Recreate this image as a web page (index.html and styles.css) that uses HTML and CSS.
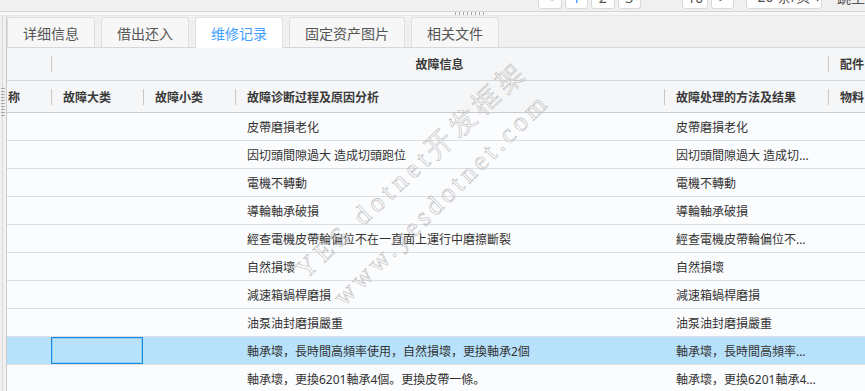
FILE: index.html
```html
<!DOCTYPE html>
<html>
<head>
    <meta charset="utf-8">
    <title>维修记录</title>
    <link rel="stylesheet" href="styles.css">
</head>
<body>
    <div class="page">
        <div class="toolbar">
            <div class="pager">
                <span class="pg disabled">&lt;</span>
                <span class="pg current">1</span>
                <span class="pg">2</span>
                <span class="pg">3</span>
                <span class="pg more">•••</span>
                <span class="pg wide">10</span>
                <span class="pg">&gt;</span>
                <span class="size">20 条/页 ▾</span>
                <span class="jump">跳至</span>
            </div>
        </div>
        <div class="hsplit"><span class="hgrip"></span></div>

        <div class="main">
            <div class="vsplit"><span class="vgrip"></span></div>
            <div class="panel">
                <div class="tabs">
                    <span class="tab">详细信息</span>
                    <span class="tab">借出还入</span>
                    <span class="tab active">维修记录</span>
                    <span class="tab">固定资产图片</span>
                    <span class="tab">相关文件</span>
                </div>

                <div class="grid">
                    <table>
                        <colgroup>
                            <col style="width: 44px">
                            <col style="width: 92px">
                            <col style="width: 92px">
                            <col style="width: 429px">
                            <col style="width: 164px">
                            <col style="width: 120px">
                            <col style="width: 120px">
                        </colgroup>
                        <thead>
                            <tr class="group">
                                <th></th>
                                <th colspan="4" class="sep center">故障信息</th>
                                <th colspan="2" class="sep">配件</th>
                            </tr>
                            <tr class="cols">
                                <th class="clip">称</th>
                                <th class="sep">故障大类</th>
                                <th class="sep">故障小类</th>
                                <th class="sep">故障诊断过程及原因分析</th>
                                <th class="sep">故障处理的方法及结果</th>
                                <th class="sep">物料</th>
                                <th class="sep">数量</th>
                            </tr>
                        </thead>
                        <tbody>
                            <tr><td></td><td></td><td></td><td>皮帶磨損老化</td><td>皮帶磨損老化</td><td></td><td></td></tr>
                            <tr><td></td><td></td><td></td><td>因切頭間隙過大 造成切頭跑位</td><td>因切頭間隙過大 造成切頭跑位</td><td></td><td></td></tr>
                            <tr><td></td><td></td><td></td><td>電機不轉動</td><td>電機不轉動</td><td></td><td></td></tr>
                            <tr><td></td><td></td><td></td><td>導輪軸承破損</td><td>導輪軸承破損</td><td></td><td></td></tr>
                            <tr><td></td><td></td><td></td><td>經查電機皮帶輪偏位不在一直面上運行中磨擦斷裂</td><td>經查電機皮帶輪偏位不在一直面上運行中磨擦斷裂</td><td></td><td></td></tr>
                            <tr><td></td><td></td><td></td><td>自然損壞</td><td>自然損壞</td><td></td><td></td></tr>
                            <tr><td></td><td></td><td></td><td>減速箱蝸桿磨損</td><td>減速箱蝸桿磨損</td><td></td><td></td></tr>
                            <tr><td></td><td></td><td></td><td>油泵油封磨損嚴重</td><td>油泵油封磨損嚴重</td><td></td><td></td></tr>
                            <tr class="sel"><td></td><td class="cur"></td><td></td><td>軸承壞，長時間高頻率使用，自然損壞，更換軸承2個</td><td>軸承壞，長時間高頻率使用，自然損壞，更換軸承2個</td><td></td><td></td></tr>
                            <tr><td></td><td></td><td></td><td>軸承壞，更換6201軸承4個。更換皮帶一條。</td><td>軸承壞，更換6201軸承4個。更換皮帶一條。</td><td></td><td></td></tr>
                        </tbody>
                    </table>
                </div>
            </div>
        </div>

        <svg class="watermark" width="865" height="391" viewBox="0 0 865 391">
            <text x="306" y="280" textLength="300" lengthAdjust="spacing" transform="rotate(-43 306 280)">YES dotnet开发框架</text>
            <text x="344" y="307" textLength="286" lengthAdjust="spacing" transform="rotate(-44.5 344 307)">www.yesdotnet.com</text>
        </svg>
    </div>
</body>
</html>
```

FILE: styles.css
```css
body { margin: 0; font-family: "Noto Sans", "Noto Sans CJK SC", "Noto Sans CJK TC", sans-serif; font-size: 12px; color: #333; background: #f0f0f0; overflow: hidden; }
.page { position: relative; width: 865px; height: 391px; overflow: hidden; }

/* pager (scrolled half out of view) */
.toolbar { height: 11px; overflow: hidden; background: #f0f0f0; }
.pager { display: flex; align-items: center; gap: 3px; height: 24px; margin-top: -15px; padding-left: 538px; font-size: 14px; white-space: nowrap; }
.pg { width: 24px; height: 24px; box-sizing: border-box; border: 1px solid #d9d9d9; border-radius: 3px; background: #fff; display: flex; align-items: center; justify-content: center; color: #555; }
.pg.disabled { color: #c0c0c0; }
.pg.current { color: #1890ff; }
.pg.more { width: 33px; border-color: transparent; background: none; color: #bbb; font-size: 10px; }
.pg.wide { width: 26px; margin-left: 3px; }
.size { height: 24px; width: 76px; box-sizing: border-box; margin-left: 9px; border: 1px solid #d9d9d9; border-radius: 3px; background: #fff; padding-left: 10px; line-height: 22px; color: #555; }
.jump { margin-left: 12px; color: #555; }

/* splitters */
.hsplit { height: 3px; border-top: 1px solid #d6d6d6; border-bottom: 1px solid #e6e6e6; background: #f7f7f7; display: flex; align-items: center; }
.hgrip { width: 30px; height: 3px; margin-left: 455px; background: repeating-linear-gradient(90deg, #a8a8a8 0 1px, transparent 1px 4px); }
.main { display: flex; height: 375px; }
.vsplit { width: 3px; margin-left: 2px; border-left: 1px solid #d9d9d9; border-right: 1px solid #c9c9c9; background: #f2f2f2; }
.vgrip { display: block; width: 4px; height: 30px; margin: 72px 0 0 -2px; background: repeating-linear-gradient(#aaa 0 1px, transparent 1px 3px); }

.panel { flex: 1; min-width: 0; display: flex; flex-direction: column; background: #fff; overflow: hidden; }

/* tabs */
.tabs { height: 32px; box-sizing: border-box; display: flex; align-items: flex-end; gap: 6px; border-bottom: 1px solid #d4d7dc; background: #f0f0f0; }
.tab { height: 30px; box-sizing: border-box; padding: 0 15px; display: flex; align-items: center; border: 1px solid #dcdfe6; border-bottom: none; border-radius: 3px 3px 0 0; background: #f7f7f7; color: #555; font-size: 14px; white-space: nowrap; }
.tab.active { height: 31px; margin-bottom: -1px; padding-bottom: 1px; background: #fff; color: #409eff; }

/* grid */
.grid { flex: 1; overflow: hidden; background: #fbfcfd; }
.grid table { border-collapse: separate; border-spacing: 0; table-layout: fixed; width: 1061px; }
.grid th { height: 32px; padding: 0 12px; box-sizing: border-box; background: #f5f6f7; text-align: left; font-weight: bold; color: #3a3a3a; white-space: nowrap; overflow: hidden; border-bottom: 1px solid #d6d9dd; }
.grid tr.group th { height: 33px; }
.grid tr.cols th { border-bottom-color: #c8ccd1; }
.grid th.center { text-align: center; }
.grid th.clip { padding-left: 1px; }
.grid th.sep { background: #f5f6f7 linear-gradient(#c8c8c8, #c8c8c8) no-repeat left center / 1px 16px; }
.grid td { height: 28px; padding: 0 12px; box-sizing: border-box; border-bottom: 1px solid #dcdfe4; white-space: nowrap; overflow: hidden; text-overflow: ellipsis; color: #333; }
.grid tr.sel td { background: #b8e2fb; }
.grid td.cur { box-shadow: inset 0 0 0 1px #1b8ae3, inset 0 0 0 2px rgba(120, 195, 245, 0.6); }

/* watermark */
.watermark { position: absolute; top: 0; left: 0; pointer-events: none; }
.watermark text { font-family: "Liberation Serif", serif; font-size: 27px; fill: rgba(255, 255, 255, 0.1); stroke: #bdbdbd; stroke-width: 0.6; }
```
